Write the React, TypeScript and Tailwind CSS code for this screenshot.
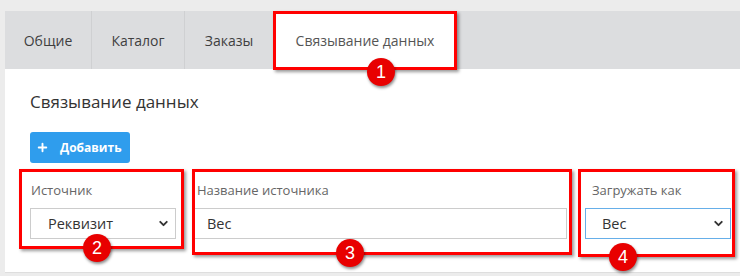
import React from 'react';
import { ChevronDown, Plus } from 'lucide-react';

const tabs = [
  { name: 'Общие', width: 'w-[87px]' },
  { name: 'Каталог', width: 'w-[93px]' },
  { name: 'Заказы', width: 'w-[89px]' },
];

const Badge: React.FC<{ n: number; className: string }> = ({ n, className }) => (
  <div
    className={`absolute flex h-[28px] w-[28px] items-center justify-center rounded-full bg-[#e80000] text-[18px] leading-none text-white shadow-[1px_2px_3px_rgba(0,0,0,0.45)] ${className}`}
    style={{ fontFamily: '"Liberation Sans", Arial, sans-serif' }}
  >
    {n}
  </div>
);

const RedBox: React.FC<{ className: string }> = ({ className }) => (
  <div className={`pointer-events-none absolute border-[3px] border-[#ff0000] shadow-[2px_2px_3px_rgba(0,0,0,0.4)] ${className}`} />
);

const App: React.FC = () => {
  return (
    <div
      className="relative h-[276px] w-[740px] overflow-hidden bg-[#ececec] pl-[5px] pt-[11px]"
      style={{ fontFamily: '"Open Sans", "Noto Sans", sans-serif' }}
    >
      {/* tabs */}
      <div className="flex h-[58px] bg-[#dcdddf]">
        {tabs.map((t) => (
          <div
            key={t.name}
            className={`flex ${t.width} items-center justify-center border-r border-[#cfd0d2] text-[14px] font-medium text-[#3f3f3f]`}
          >
            {t.name}
          </div>
        ))}
        <div className="flex w-[182px] items-center justify-center bg-white text-[14px] text-[#555]">
          Связывание данных
        </div>
      </div>

      {/* content */}
      <div className="h-[204px] border-b border-[#dedede] bg-white pl-[25px] pr-[9px] pt-[21px]">
        <h2 className="text-[17px] leading-[24px] text-[#333]">Связывание данных</h2>

        <button className="mt-[18px] flex h-[31px] w-[100px] items-center gap-[11px] rounded-[3px] bg-[#2f9ded] pl-[6px] text-[12px] font-bold text-white">
          <Plus size={13} strokeWidth={3.5} />
          Добавить
        </button>

        <div className="mt-[18px] flex gap-[17px]">
          <div className="w-[146px]">
            <div className="pl-[1px] text-[13px] leading-[18px] text-[#666]">Источник</div>
            <div className="mt-[9px] flex h-[31px] items-center justify-between border border-[#cccccc] pl-[17px] pr-[5px] text-[14.5px] text-[#333]">
              Реквизит
              <ChevronDown size={13} strokeWidth={3.5} className="text-[#333]" />
            </div>
          </div>

          <div className="w-[374px]">
            <div className="pl-[4px] text-[13px] leading-[18px] text-[#666]">Название источника</div>
            <div className="mt-[9px] flex h-[31px] items-center border border-[#cccccc] pl-[13px] text-[14.5px] text-[#333]">
              Вес
            </div>
          </div>

          <div className="ml-[1px] w-[146px]">
            <div className="pl-[7px] text-[13px] leading-[18px] text-[#666]">Загружать как</div>
            <div className="mt-[9px] flex h-[31px] items-center justify-between border border-[#66afe9] pl-[16px] pr-[5px] text-[14.5px] text-[#333]">
              Вес
              <ChevronDown size={13} strokeWidth={3.5} className="text-[#333]" />
            </div>
          </div>
        </div>
      </div>

      {/* annotations */}
      <RedBox className="left-[273px] top-[11px] h-[59px] w-[184px]" />
      <RedBox className="left-[19px] top-[169px] h-[80px] w-[165px]" />
      <RedBox className="left-[192px] top-[169px] h-[86px] w-[380px]" />
      <RedBox className="left-[578px] top-[169px] h-[88px] w-[157px]" />
      <Badge n={1} className="left-[367px] top-[58px]" />
      <Badge n={2} className="left-[83px] top-[234px]" />
      <Badge n={3} className="left-[336px] top-[239px]" />
      <Badge n={4} className="left-[609px] top-[243px]" />
    </div>
  );
};

export default App;
